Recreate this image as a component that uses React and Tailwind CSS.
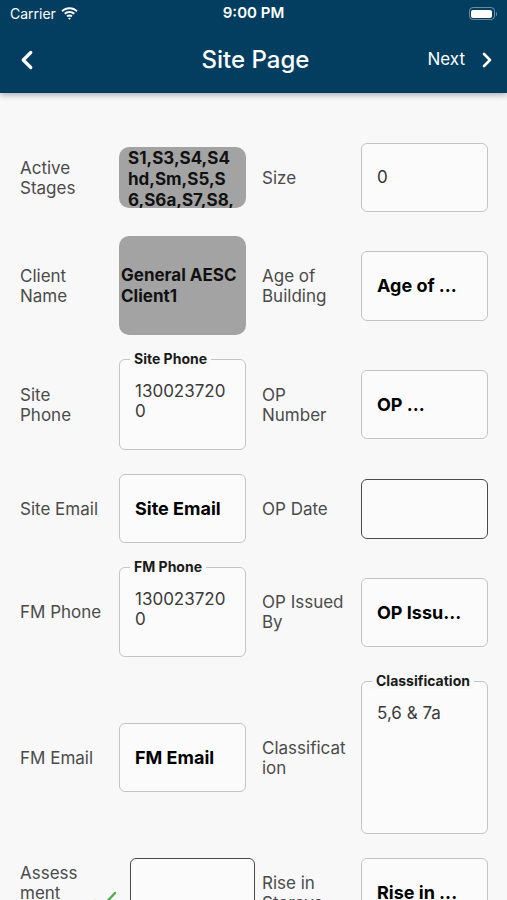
import { ChevronLeft, ChevronRight } from 'lucide-react'

const font = { fontFamily: 'Inter, "Noto Sans", sans-serif' }

function Label({ lines, w = 'w-[99px]' }) {
  return (
    <div className={`${w} shrink-0 text-[17px] leading-[20px] text-[#4b4b4b]`}>
      {lines.map((l, i) => <div key={i}>{l}</div>)}
    </div>
  )
}

function Box({ h, children, dark, legend, w = 'w-[127px]' }) {
  return (
    <div className={`relative ${w} shrink-0 rounded-[6px] bg-[#fbfbfb] ${dark ? 'border-[1.5px] border-[#4a4a4a]' : 'border border-[#c4c4c4]'}`}
      style={{ height: h }}>
      {legend && (
        <div className="absolute -top-[10px] left-[10px] bg-[#f8f8f8] px-[4px] text-[14px] font-bold leading-[17px] text-[#1a1a1a]">{legend}</div>
      )}
      {children}
    </div>
  )
}

function Bold({ children }) {
  return <div className="flex h-full items-center whitespace-nowrap pl-[15px] text-[18px] font-bold text-black">{children}</div>
}

function Plain({ children }) {
  return <div className="pl-[15px] pt-[21px] text-[17px] leading-[20px] text-[#3a3a3a]">{children}</div>
}

function Row({ left, right }) {
  return (
    <div className="grid grid-cols-[226px_227px] gap-x-4 items-center">
      <div className="flex items-center">{left}</div>
      <div className="flex items-center">{right}</div>
    </div>
  )
}

export default function App() {
  return (
    <div className="h-[900px] overflow-hidden bg-[#f8f8f8]" style={font}>
      <div className="relative z-10 h-[93px] bg-[#033e60] text-white shadow-[0_2px_6px_rgba(0,0,0,0.3)]">
        <div className="flex h-[27px] items-center justify-between px-[10px]">
          <div className="flex w-[120px] items-center gap-[5px] text-[14px]">
            Carrier
            <svg width="17" height="13" viewBox="0 0 17 13" fill="white">
              <path d="M8.5 2.2c2.6 0 5 1 6.8 2.7l1.3-1.4C14.5 1.4 11.6.2 8.5.2S2.5 1.4.4 3.5l1.3 1.4C3.5 3.2 5.9 2.2 8.5 2.2z" />
              <path d="M8.5 5.9c1.6 0 3 .6 4.1 1.6l1.3-1.4C12.5 4.8 10.6 4 8.5 4S4.5 4.8 3.1 6.1l1.3 1.4c1.1-1 2.5-1.6 4.1-1.6z" />
              <path d="M8.5 9.4c.7 0 1.3.3 1.8.7l1.3-1.4c-.8-.7-1.9-1.1-3.1-1.1s-2.3.4-3.1 1.1l1.3 1.4c.5-.4 1.1-.7 1.8-.7zM8.5 12.8l1.4-1.5c-.4-.3-.9-.5-1.4-.5s-1 .2-1.4.5z" />
            </svg>
          </div>
          <div className="text-[15px] font-semibold">9:00 PM</div>
          <div className="flex w-[120px] justify-end">
            <div className="flex items-center">
              <div className="flex h-[13px] w-[26px] items-center rounded-[4px] border border-white/40 p-[1.5px]">
                <div className="h-full w-full rounded-[2px] bg-white" />
              </div>
              <div className="ml-[1px] h-[4px] w-[1.5px] rounded-r bg-white/40" />
            </div>
          </div>
        </div>
        <div className="flex h-[66px] items-center justify-between pl-[12px] pr-[8px]">
          <div className="flex w-[110px] items-center">
            <ChevronLeft size={30} strokeWidth={2.6} />
          </div>
          <div className="text-[24px] font-medium">Site Page</div>
          <div className="flex w-[110px] items-center justify-end gap-[10px] text-[17px]">
            Next
            <ChevronRight size={24} strokeWidth={2.6} />
          </div>
        </div>
      </div>

      <div className="flex flex-col gap-6 pl-5 pt-[50px]">
        <Row
          left={<>
            <Label lines={['Active', 'Stages']} />
            <div className="h-[61px] w-[127px] shrink-0 overflow-hidden rounded-[10px] bg-[#a3a3a3] pl-[9px] pt-[1px] text-[17px] font-bold leading-[21px] text-[#111]">
              S1,S3,S4,S4<br />hd,Sm,S5,S<br />6,S6a,S7,S8,
            </div>
          </>}
          right={<>
            <Label lines={['Size']} />
            <Box h={69}>
              <div className="flex h-full items-center pl-[15px] text-[17px] text-[#333]">0</div>
            </Box>
          </>}
        />
        <Row
          left={<>
            <Label lines={['Client', 'Name']} />
            <div className="flex h-[99px] w-[127px] shrink-0 items-center rounded-[10px] bg-[#a3a3a3] pl-[2px] text-[17px] font-bold leading-[21px] text-[#111]">
              <div>General AESC<br />Client1</div>
            </div>
          </>}
          right={<>
            <Label lines={['Age of', 'Building']} />
            <Box h={70}><Bold>Age of ...</Bold></Box>
          </>}
        />
        <Row
          left={<>
            <Label lines={['Site', 'Phone']} />
            <Box h={91} legend="Site Phone"><Plain>130023720<br />0</Plain></Box>
          </>}
          right={<>
            <Label lines={['OP', 'Number']} />
            <Box h={69}><Bold>OP ...</Bold></Box>
          </>}
        />
        <Row
          left={<>
            <Label lines={['Site Email']} />
            <Box h={69}><Bold>Site Email</Bold></Box>
          </>}
          right={<>
            <Label lines={['OP Date']} />
            <Box h={60} dark />
          </>}
        />
        <Row
          left={<>
            <Label lines={['FM Phone']} />
            <Box h={90} legend="FM Phone"><Plain>130023720<br />0</Plain></Box>
          </>}
          right={<>
            <Label lines={['OP Issued', 'By']} />
            <Box h={69}><Bold>OP Issu...</Bold></Box>
          </>}
        />
        <Row
          left={<>
            <Label lines={['FM Email']} />
            <Box h={69}><Bold>FM Email</Bold></Box>
          </>}
          right={<>
            <Label lines={['Classificat', 'ion']} />
            <Box h={153} legend="Classification"><Plain>5,6 &amp; 7a</Plain></Box>
          </>}
        />
        <Row
          left={<>
            <Label lines={['Assess', 'ment', 'Date']} w="w-[73px]" />
            <svg width="24" height="20" viewBox="0 0 24 20" className="mr-[13px] mt-[14px] shrink-0">
              <path d="M2 11l6.5 6.5L22 3" fill="none" stroke="#4caf50" strokeWidth="2.4" strokeLinecap="round" strokeLinejoin="round" />
            </svg>
            <Box h={69} dark w="w-[125px]" />
          </>}
          right={<>
            <Label lines={['Rise in', 'Storeys']} />
            <Box h={69}><Bold>Rise in ...</Bold></Box>
          </>}
        />
      </div>
    </div>
  )
}
